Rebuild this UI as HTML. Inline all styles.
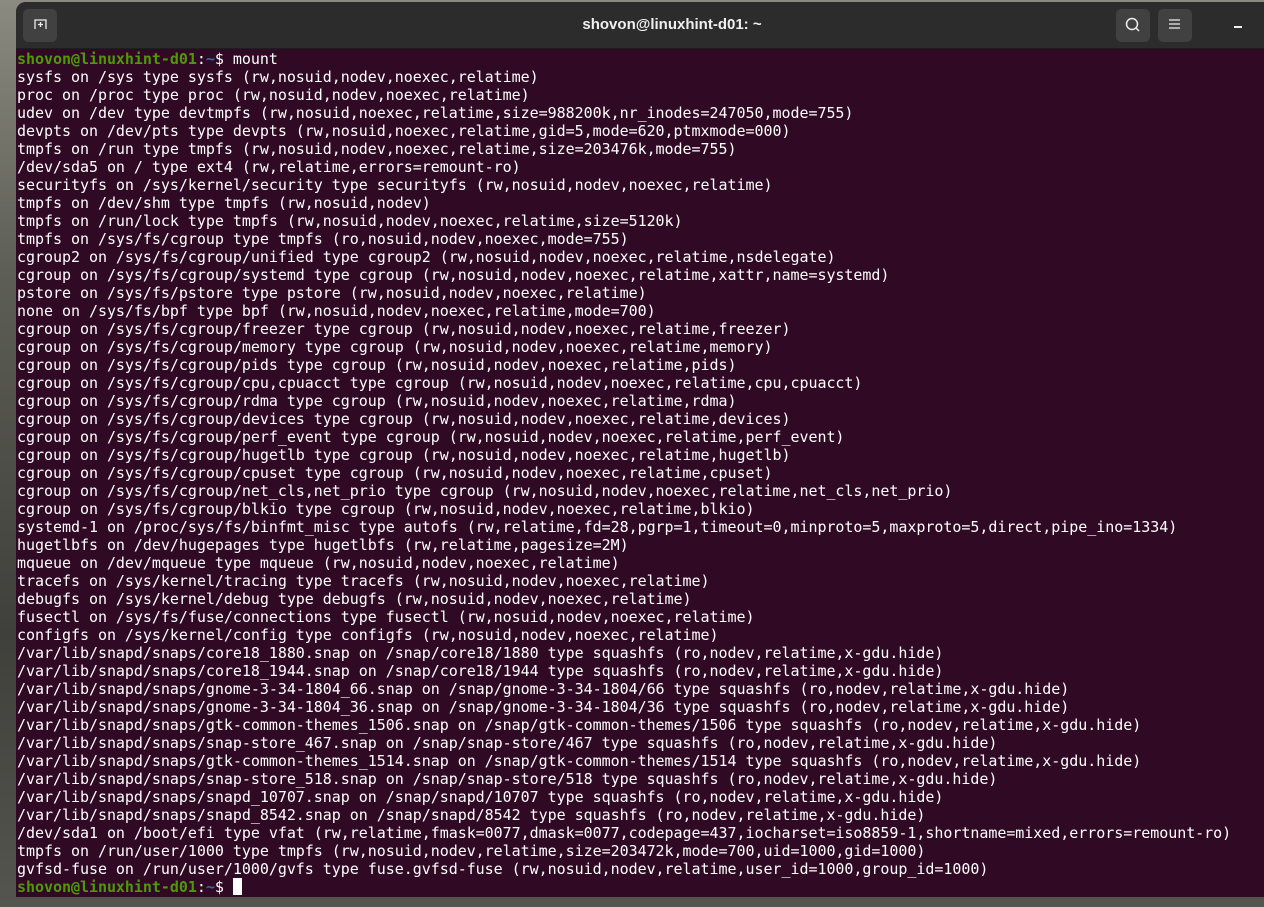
<!DOCTYPE html>
<html><head><meta charset="utf-8"><style>
html,body{margin:0;padding:0;width:1264px;height:907px;overflow:hidden;background:linear-gradient(180deg,#8a8a80 0%,#5d5e55 30%,#3f403b 70%,#55554f 100%);}
#win{position:absolute;left:16px;top:2px;width:1260px;height:895px;background:#300a24;border-radius:10px 0 0 0;overflow:hidden;}
#bar{height:46px;background:#2c2c2c;position:relative;border-bottom:1px solid #1e1e1e;}
.btn{position:absolute;top:7px;width:34px;height:33px;background:#414141;border-radius:5px;}
#title{position:absolute;left:0;right:0;top:14px;text-align:center;color:#f0f0f0;font:bold 15px "Liberation Sans",sans-serif;padding-left:52px;}
pre{margin:0;padding:1px 0 0 1px;font:15px/18px "DejaVu Sans Mono","Liberation Mono",monospace;letter-spacing:-0.037px;color:#ffffff;}
.g{font-weight:bold;color:#4e9a06}
.b{font-weight:bold;color:#3465a4}
.cur{display:inline-block;width:9px;height:17px;background:#fff;vertical-align:-3px}
</style></head><body>
<div id="win">
<div id="bar">
<div class="btn" style="left:7px"><svg width="33" height="32"><path d="M12 20V11h11v9M17.5 13v5M15 15.5h5" stroke="#eee" stroke-width="1.3" fill="none"/></svg></div>
<div id="title">shovon@linuxhint-d01: ~</div>
<div class="btn" style="left:1100px"><svg width="33" height="32"><circle cx="16" cy="15" r="5.5" stroke="#eee" stroke-width="1.5" fill="none"/><path d="M20 19l3 3" stroke="#eee" stroke-width="1.5"/></svg></div>
<div class="btn" style="left:1142px"><svg width="33" height="32"><path d="M11 11h11M11 15h11M11 19h11" stroke="#eee" stroke-width="1.3"/></svg></div>
<div style="position:absolute;left:1218px;top:24px;width:8px;height:1.5px;background:#eee"></div>
<div style="position:absolute;left:1258px;top:20px;width:8px;height:8px;border:1.3px solid #eee"></div>
</div>
<pre><span class="g">shovon@linuxhint-d01</span>:<span class="b">~</span>$ mount
sysfs on /sys type sysfs (rw,nosuid,nodev,noexec,relatime)
proc on /proc type proc (rw,nosuid,nodev,noexec,relatime)
udev on /dev type devtmpfs (rw,nosuid,noexec,relatime,size=988200k,nr_inodes=247050,mode=755)
devpts on /dev/pts type devpts (rw,nosuid,noexec,relatime,gid=5,mode=620,ptmxmode=000)
tmpfs on /run type tmpfs (rw,nosuid,nodev,noexec,relatime,size=203476k,mode=755)
/dev/sda5 on / type ext4 (rw,relatime,errors=remount-ro)
securityfs on /sys/kernel/security type securityfs (rw,nosuid,nodev,noexec,relatime)
tmpfs on /dev/shm type tmpfs (rw,nosuid,nodev)
tmpfs on /run/lock type tmpfs (rw,nosuid,nodev,noexec,relatime,size=5120k)
tmpfs on /sys/fs/cgroup type tmpfs (ro,nosuid,nodev,noexec,mode=755)
cgroup2 on /sys/fs/cgroup/unified type cgroup2 (rw,nosuid,nodev,noexec,relatime,nsdelegate)
cgroup on /sys/fs/cgroup/systemd type cgroup (rw,nosuid,nodev,noexec,relatime,xattr,name=systemd)
pstore on /sys/fs/pstore type pstore (rw,nosuid,nodev,noexec,relatime)
none on /sys/fs/bpf type bpf (rw,nosuid,nodev,noexec,relatime,mode=700)
cgroup on /sys/fs/cgroup/freezer type cgroup (rw,nosuid,nodev,noexec,relatime,freezer)
cgroup on /sys/fs/cgroup/memory type cgroup (rw,nosuid,nodev,noexec,relatime,memory)
cgroup on /sys/fs/cgroup/pids type cgroup (rw,nosuid,nodev,noexec,relatime,pids)
cgroup on /sys/fs/cgroup/cpu,cpuacct type cgroup (rw,nosuid,nodev,noexec,relatime,cpu,cpuacct)
cgroup on /sys/fs/cgroup/rdma type cgroup (rw,nosuid,nodev,noexec,relatime,rdma)
cgroup on /sys/fs/cgroup/devices type cgroup (rw,nosuid,nodev,noexec,relatime,devices)
cgroup on /sys/fs/cgroup/perf_event type cgroup (rw,nosuid,nodev,noexec,relatime,perf_event)
cgroup on /sys/fs/cgroup/hugetlb type cgroup (rw,nosuid,nodev,noexec,relatime,hugetlb)
cgroup on /sys/fs/cgroup/cpuset type cgroup (rw,nosuid,nodev,noexec,relatime,cpuset)
cgroup on /sys/fs/cgroup/net_cls,net_prio type cgroup (rw,nosuid,nodev,noexec,relatime,net_cls,net_prio)
cgroup on /sys/fs/cgroup/blkio type cgroup (rw,nosuid,nodev,noexec,relatime,blkio)
systemd-1 on /proc/sys/fs/binfmt_misc type autofs (rw,relatime,fd=28,pgrp=1,timeout=0,minproto=5,maxproto=5,direct,pipe_ino=1334)
hugetlbfs on /dev/hugepages type hugetlbfs (rw,relatime,pagesize=2M)
mqueue on /dev/mqueue type mqueue (rw,nosuid,nodev,noexec,relatime)
tracefs on /sys/kernel/tracing type tracefs (rw,nosuid,nodev,noexec,relatime)
debugfs on /sys/kernel/debug type debugfs (rw,nosuid,nodev,noexec,relatime)
fusectl on /sys/fs/fuse/connections type fusectl (rw,nosuid,nodev,noexec,relatime)
configfs on /sys/kernel/config type configfs (rw,nosuid,nodev,noexec,relatime)
/var/lib/snapd/snaps/core18_1880.snap on /snap/core18/1880 type squashfs (ro,nodev,relatime,x-gdu.hide)
/var/lib/snapd/snaps/core18_1944.snap on /snap/core18/1944 type squashfs (ro,nodev,relatime,x-gdu.hide)
/var/lib/snapd/snaps/gnome-3-34-1804_66.snap on /snap/gnome-3-34-1804/66 type squashfs (ro,nodev,relatime,x-gdu.hide)
/var/lib/snapd/snaps/gnome-3-34-1804_36.snap on /snap/gnome-3-34-1804/36 type squashfs (ro,nodev,relatime,x-gdu.hide)
/var/lib/snapd/snaps/gtk-common-themes_1506.snap on /snap/gtk-common-themes/1506 type squashfs (ro,nodev,relatime,x-gdu.hide)
/var/lib/snapd/snaps/snap-store_467.snap on /snap/snap-store/467 type squashfs (ro,nodev,relatime,x-gdu.hide)
/var/lib/snapd/snaps/gtk-common-themes_1514.snap on /snap/gtk-common-themes/1514 type squashfs (ro,nodev,relatime,x-gdu.hide)
/var/lib/snapd/snaps/snap-store_518.snap on /snap/snap-store/518 type squashfs (ro,nodev,relatime,x-gdu.hide)
/var/lib/snapd/snaps/snapd_10707.snap on /snap/snapd/10707 type squashfs (ro,nodev,relatime,x-gdu.hide)
/var/lib/snapd/snaps/snapd_8542.snap on /snap/snapd/8542 type squashfs (ro,nodev,relatime,x-gdu.hide)
/dev/sda1 on /boot/efi type vfat (rw,relatime,fmask=0077,dmask=0077,codepage=437,iocharset=iso8859-1,shortname=mixed,errors=remount-ro)
tmpfs on /run/user/1000 type tmpfs (rw,nosuid,nodev,relatime,size=203472k,mode=700,uid=1000,gid=1000)
gvfsd-fuse on /run/user/1000/gvfs type fuse.gvfsd-fuse (rw,nosuid,nodev,relatime,user_id=1000,group_id=1000)
<span class="g">shovon@linuxhint-d01</span>:<span class="b">~</span>$ <span class="cur"></span></pre>
</div>
</body></html>
